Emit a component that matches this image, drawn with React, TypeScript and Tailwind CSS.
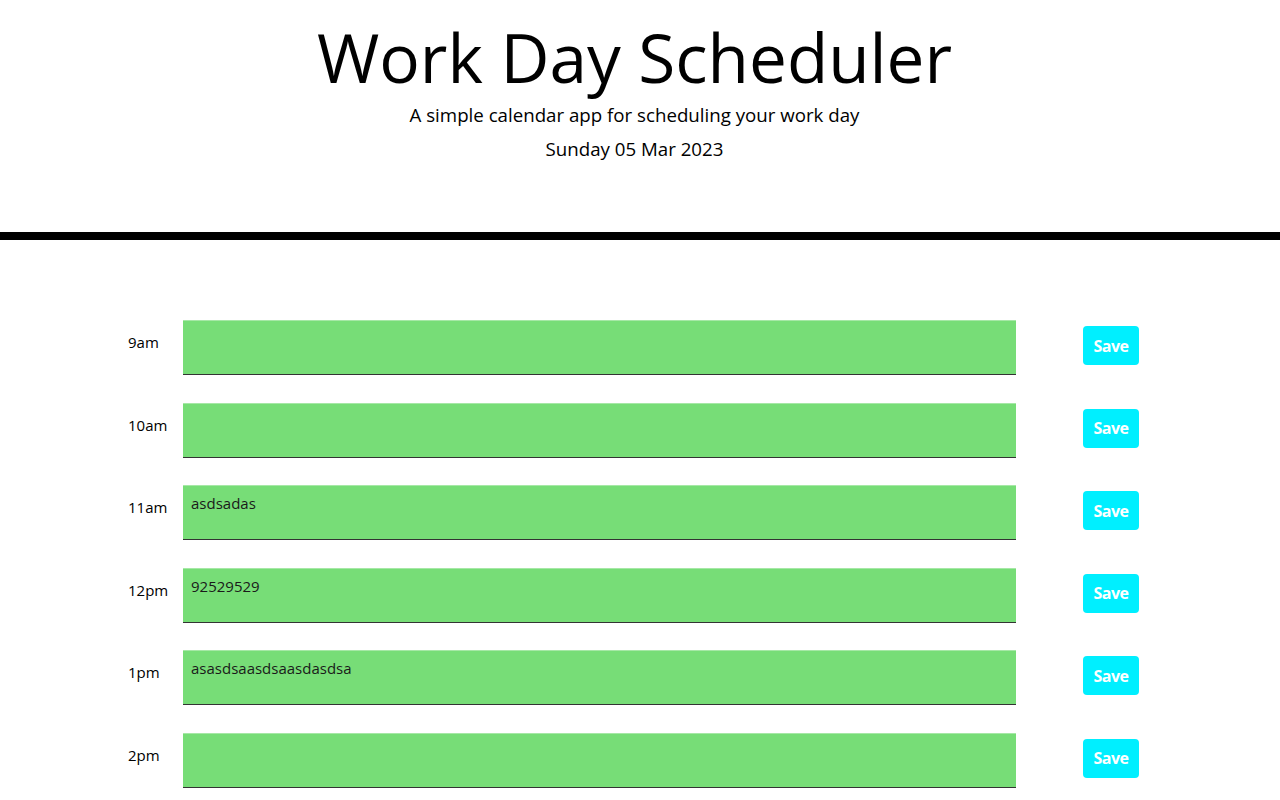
const HOURS = [
  { label: "9am", text: "" },
  { label: "10am", text: "" },
  { label: "11am", text: "asdsadas" },
  { label: "12pm", text: "92529529" },
  { label: "1pm", text: "asasdsaasdsaasdasdsa" },
  { label: "2pm", text: "" },
  { label: "3pm", text: "" },
  { label: "4pm", text: "" },
  { label: "5pm", text: "" },
];

export default function App() {
  return (
    <div className="min-h-screen bg-white text-black font-['Open_Sans',sans-serif]">
      <header className="border-b-8 border-black pt-[24px] pr-[11px] h-[240px] text-center">
        <h1 className="text-[67.5px] leading-none font-normal">Work Day Scheduler</h1>
        <p className="text-[18.7px] leading-[1.5] mt-[9px]">
          A simple calendar app for scheduling your work day
        </p>
        <p className="text-[18.7px] leading-[1.5] mt-[6px]">Sunday 05 Mar 2023</p>
      </header>

      <main className="pt-[80px] flex flex-col gap-[27.6px]">
        {HOURS.map((h) => (
          <div key={h.label} className="flex items-start pl-[128px]">
            <div className="w-[55px] pt-[10px] text-[15px] leading-6 font-medium">{h.label}</div>
            <textarea
              defaultValue={h.text}
              className="w-[833px] h-[55px] resize-none bg-[#77dd77] border-t border-t-[#a6e8a6] border-b border-b-[#333333] px-2 pt-[7px] text-[15px] leading-5 text-[#1a1a1a] outline-none"
            />
            <button
              type="button"
              className="ml-[67px] mt-[6px] w-[56px] h-[39px] rounded bg-[#00efff] text-white font-bold text-[16px] tracking-[-0.5px]"
            >
              Save
            </button>
          </div>
        ))}
      </main>
    </div>
  );
}
